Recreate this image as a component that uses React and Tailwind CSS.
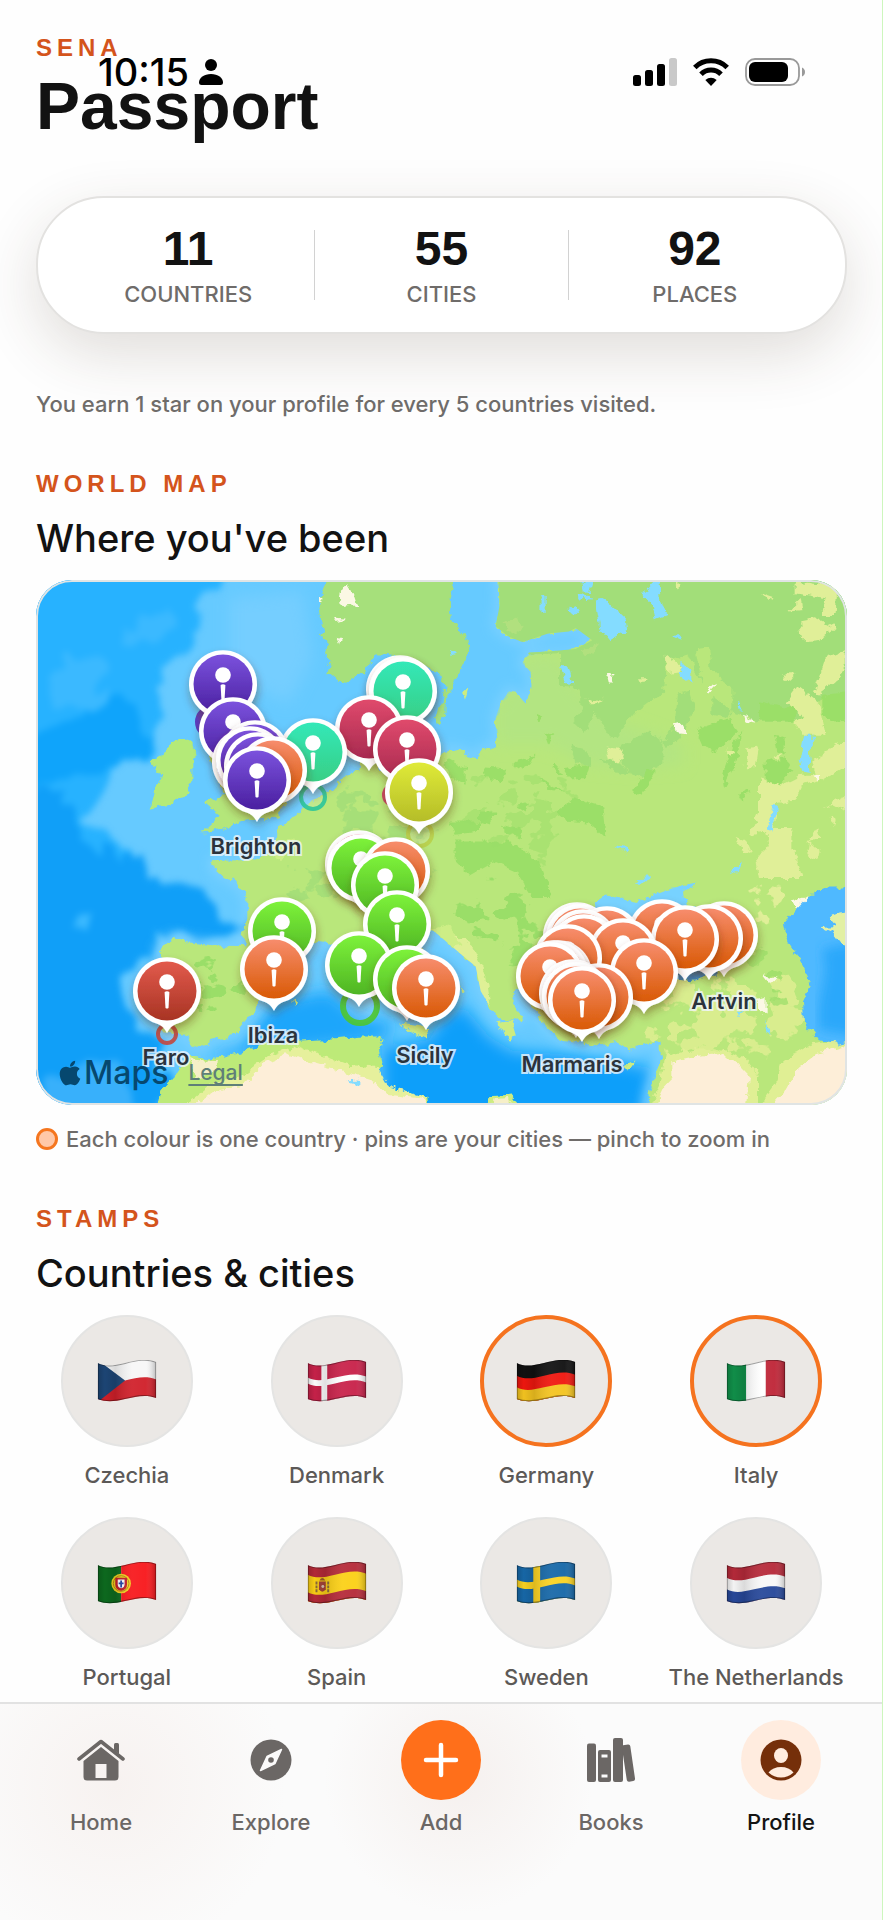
import React from "react";
import { FaApple } from "react-icons/fa";

const MAP_W = 811;
const MAP_H = 525;

const palette = {
  purple: ["#7b52dd", "#4a1fa0"],
  teal: ["#33e8b8", "#38cf85"],
  crimson: ["#e04a6c", "#a82a50"],
  lime: ["#dfea38", "#b5bd28"],
  green: ["#7df23a", "#4fb524"],
  orange: ["#f78c6c", "#d95a05"],
  red: ["#e25a4c", "#a83424"],
};

const pins = [
  { x: 187, y: 104, c: "purple" },
  { x: 364, y: 109, c: "teal" },
  { x: 367, y: 111, c: "teal" },
  { x: 333, y: 149, c: "crimson" },
  { x: 197, y: 151, c: "purple" },
  { x: 371, y: 169, c: "crimson" },
  { x: 277, y: 172, c: "teal" },
  { x: 219, y: 174, c: "purple" },
  { x: 210, y: 182, c: "purple" },
  { x: 214, y: 180, c: "purple" },
  { x: 222, y: 186, c: "purple" },
  { x: 237, y: 190, c: "orange" },
  { x: 221, y: 200, c: "purple" },
  { x: 383, y: 212, c: "lime" },
  { x: 323, y: 284, c: "crimson" },
  { x: 325, y: 288, c: "green" },
  { x: 360, y: 291, c: "orange" },
  { x: 349, y: 305, c: "green" },
  { x: 361, y: 344, c: "green" },
  { x: 246, y: 351, c: "green" },
  { x: 323, y: 385, c: "green" },
  { x: 238, y: 389, c: "orange" },
  { x: 371, y: 399, c: "green" },
  { x: 390, y: 408, c: "orange" },
  { x: 131, y: 411, c: "red" },
  { x: 626, y: 353, c: "orange" },
  { x: 688, y: 355, c: "orange" },
  { x: 541, y: 356, c: "orange" },
  { x: 544, y: 358, c: "orange" },
  { x: 673, y: 358, c: "orange" },
  { x: 649, y: 359, c: "orange" },
  { x: 571, y: 360, c: "orange" },
  { x: 547, y: 363, c: "orange" },
  { x: 548, y: 368, c: "orange" },
  { x: 587, y: 372, c: "orange" },
  { x: 532, y: 378, c: "orange" },
  { x: 522, y: 394, c: "orange" },
  { x: 518, y: 394, c: "orange" },
  { x: 514, y: 396, c: "orange" },
  { x: 608, y: 392, c: "orange" },
  { x: 563, y: 417, c: "orange" },
  { x: 537, y: 413, c: "orange" },
  { x: 540, y: 416, c: "orange" },
  { x: 546, y: 420, c: "orange" },
];

const rings = [
  { x: 277, y: 217, r: 12, w: 4, c: "#2bc59a" },
  { x: 384, y: 254, r: 12, w: 4, c: "#b9d04a" },
  { x: 324, y: 426, r: 17, w: 6, c: "#4fc62f" },
  { x: 131, y: 454, r: 9, w: 4, c: "#c4483f" },
  { x: 176, y: 142, r: 14, w: 6, c: "#5a2fb8" },
  { x: 358, y: 215, r: 10, w: 4, c: "#c8385f" },
];

const labels = [
  { x: 220, y: 266, t: "Brighton" },
  { x: 130, y: 477, t: "Faro" },
  { x: 237, y: 455, t: "Ibiza" },
  { x: 389, y: 475, t: "Sicily" },
  { x: 536, y: 484, t: "Marmaris" },
  { x: 688, y: 421, t: "Artvin" },
];

const pct = (v, total) => `${(v / total) * 100}%`;

function Pin({ x, y, c }) {
  return (
    <g transform={`translate(${x} ${y})`} filter="url(#pinShadow)">
      <path
        d="M0 42 C-3 36 -6 34 -12 32 A34 34 0 1 1 12 32 C6 34 3 36 0 42Z"
        fill="#fff"
      />
      <circle r="29.5" fill={`url(#pin-${c})`} />
      <circle cy="-9" r="7.8" fill="#fff" />
      <path d="M-2.4 1 Q0 -.5 2.4 1 L1.5 17 Q0 18 -1.5 17Z" fill="#fff" />
    </g>
  );
}

const LAND =
  "M1408 20 L1412 100 1400 160 1440 190 1480 205 1560 180 1620 175 1640 165 1690 200 1640 225 1560 232 1500 235 1480 265 1505 290 1508 340 1490 380 1460 350 1440 345 1415 380 1400 420 1405 480 1400 505 1365 508 1340 535 1290 515 1260 512 1225 530 1180 540 1120 560 1050 570 1030 500 1000 490 985 570 930 600 890 640 850 655 800 700 740 740 735 800 680 825 610 828 550 830 560 860 620 890 655 930 655 1000 640 1045 655 1072 560 1070 470 1060 430 1048 385 1085 410 1130 400 1200 385 1270 400 1315 470 1322 490 1355 520 1362 560 1335 620 1325 650 1290 690 1240 690 1200 740 1120 800 1090 860 1060 900 1070 960 1050 1010 1080 1060 1130 1110 1180 1190 1250 1240 1250 1262 1200 1230 1150 1180 1100 1170 1050 1210 1025 1290 1090 1340 1130 1355 1200 1385 1250 1410 1280 1440 1285 1482 1278 1450 1220 1465 1190 1500 1230 1540 1290 1600 1340 1650 1345 1700 1358 1760 1345 1800 1370 1850 1350 1895 1345 1895 1390 1885 1430 1865 1480 1855 1540 L2480 1540 2480 20Z";
const SCANDINAVIA =
  "M905 20 L882 60 868 110 885 170 872 185 900 205 888 235 905 265 895 290 925 315 950 322 985 305 1005 290 1040 240 1100 245 1170 270 1225 290 1250 330 1240 380 1215 420 1230 440 1248 420 1252 360 1290 290 1303 265 1325 210 1290 170 1268 140 1265 80 1278 20Z";
const BRITAIN =
  "M505 420 L560 330 640 400 700 480 770 560 790 640 745 705 640 715 580 738 520 748 572 700 525 662 590 640 560 580 520 480Z";
const IRELAND =
  "M425 490 L490 485 505 520 490 550 490 600 470 640 420 668 365 680 380 620 400 590 365 545 400 530Z";
const AFRICA =
  "M385 1540 L400 1480 440 1440 480 1385 540 1395 620 1380 700 1350 800 1345 900 1340 1000 1330 1060 1330 1050 1370 1060 1410 1030 1440 1100 1490 1195 1500 1200 1540Z";
const ISLANDS =
  "M1110 1290 L1190 1300 1195 1338 1140 1315Z M1405 1292 L1450 1285 1463 1325 1440 1342Z M1780 1415 L1820 1398 1800 1425Z M1380 1540 L1385 1500 1450 1495 1485 1540Z M1300 350 L1318 340 1308 372Z M1295 1180 L1308 1205 1300 1210Z M790 1225 L803 1222 797 1240Z";

function Patches({ id, seed, freq, cut, color, spread = 40 }) {
  return (
    <filter id={id} x="-10%" y="-10%" width="120%" height="120%" colorInterpolationFilters="sRGB">
      <feGaussianBlur in="SourceGraphic" stdDeviation={spread} result="area" />
      <feTurbulence type="fractalNoise" baseFrequency={freq} numOctaves="4" seed={seed} />
      <feColorMatrix values="0 0 0 0 1  0 0 0 0 1  0 0 0 0 1  1 0 0 0 0" result="noise" />
      <feComposite in="noise" in2="area" operator="arithmetic" k1="1" />
      <feComponentTransfer result="cutout">
        <feFuncA type="linear" slope="30" intercept={-30 * cut} />
      </feComponentTransfer>
      <feFlood floodColor={color} />
      <feComposite in2="cutout" operator="in" />
    </filter>
  );
}

function Terrain() {
  return (
    <svg
      className="block h-full w-full"
      viewBox="21 28 2433 1497"
      preserveAspectRatio="none"
      aria-hidden="true"
    >
      <defs>
        <filter id="rough" x="-5%" y="-5%" width="110%" height="110%" colorInterpolationFilters="sRGB">
          <feTurbulence type="fractalNoise" baseFrequency="0.04" numOctaves="3" seed="4" result="n" />
          <feDisplacementMap in="SourceGraphic" in2="n" scale="26" xChannelSelector="R" yChannelSelector="G" />
        </filter>
        <filter id="soft" x="-20%" y="-20%" width="140%" height="140%">
          <feGaussianBlur stdDeviation="22" />
        </filter>
        <filter id="coast" x="-10%" y="-10%" width="120%" height="120%">
          <feGaussianBlur stdDeviation="16" />
        </filter>
        <filter id="swell" x="-10%" y="-10%" width="120%" height="120%" colorInterpolationFilters="sRGB">
          <feTurbulence type="fractalNoise" baseFrequency="0.008" numOctaves="3" seed="9" result="n" />
          <feDisplacementMap in="SourceGraphic" in2="n" scale="140" xChannelSelector="R" yChannelSelector="G" />
          <feGaussianBlur stdDeviation="10" />
        </filter>
        <Patches id="woods" seed="11" freq="0.014 0.018" cut={0.53} color="#9ade68" />
        <Patches id="pine" seed="5" freq="0.013 0.016" cut={0.5} color="#a2de79" />
        <Patches id="steppe" seed="27" freq="0.013 0.015" cut={0.47} color="#e0ef98" />
        <Patches id="anatolia" seed="33" freq="0.013 0.016" cut={0.45} color="#d9ed8e" />
        <clipPath id="landClip">
          <path d={LAND} />
        </clipPath>
      </defs>

      <rect x="0" y="0" width="2500" height="1560" fill="#66caff" />
      <g filter="url(#swell)">
        <path d="M-40 -40 L560 -40 520 100 470 200 380 300 430 420 360 520 230 560 180 690 300 850 -40 900Z" fill="#27b2ff" />
        <path d="M-40 460 L150 430 220 330 400 480 300 540 180 560 80 620 -40 640Z" fill="#0fa4fb" />
        <path d="M-40 640 L150 640 190 760 300 860 450 890 560 950 650 1050 500 1060 380 1050 360 1120 290 1180 320 1300 400 1350 400 1560 -40 1560Z" fill="#109ff8" />
        <path d="M100 240 L230 260 250 350 180 400 60 390Z" fill="#3bb9ff" />
        <path d="M80 1440 L300 1420 380 1560 60 1560Z" fill="#38b0fb" />
        <path d="M120 980 L180 960 200 1010 140 1020Z M280 150 L420 120 400 180 300 200Z" fill="#3bb9ff" />
      </g>
      <g filter="url(#soft)">
        <path d="M530 1380 L640 1360 690 1290 740 1230 900 1200 1000 1280 1100 1290 1060 1340 600 1390Z" fill="#1ba6fb" />
        <path d="M1060 1360 L1200 1340 1240 1280 1300 1240 1380 1330 1450 1370 1600 1380 1740 1400 1870 1420 1840 1560 1060 1560Z" fill="#0c9ffa" />
        <path d="M600 80 L820 60 850 250 780 380 600 300Z" fill="#74ceff" />
      </g>
      <path d={LAND} fill="none" stroke="#7fd2ff" strokeWidth="22" strokeLinejoin="round" filter="url(#coast)" />

      <g filter="url(#rough)">
        <path d={LAND} fill="#b9e77b" />
        <path d={SCANDINAVIA} fill="#a6e07b" />
        <path d={BRITAIN} fill="#b4e67a" />
        <path d={IRELAND} fill="#b4ea78" />
        <path d={AFRICA} fill="#bdea78" />
        <path d={ISLANDS} fill="#cdec80" />
      </g>

      <g clipPath="url(#landClip)">
        <g transform="translate(1260 23) scale(1 .95)">
          <path d="M140 380 L240 230 330 230 390 330 480 420 620 470 700 500 700 560 560 570 420 560 300 500 140 500Z" fill="#b3e582" filter="url(#soft)" />
          <g filter="url(#rough)">
            <path
              d="M130 -10 L1220 -10 1220 350 1130 350 1040 430 930 430 850 400 850 330 790 280 780 210 740 215 760 320 720 230 650 250 645 350 600 370 560 400 500 480 470 460 440 400 410 470 370 430 400 400 385 330 330 320 330 225 230 230 130 190Z"
              fill="#a2de79"
            />
            <path
              d="M690 350 L720 340 735 390 710 460 650 510 640 490 680 440Z M790 350 L850 400 830 420 790 410Z M520 500 L600 460 640 490 640 560 560 600 520 560 500 520Z M365 500 L410 510 430 560 380 560Z M450 540 L500 550 550 590 500 580Z"
              fill="#a2de79"
            />
            <path
              d="M740 455 L840 420 870 460 800 525 760 500Z M930 370 L1040 390 1040 430 930 430Z M1120 350 L1220 340 1220 420 1150 430 1120 400Z M850 500 L880 460 860 560 825 630 820 590Z M950 550 L1010 540 1030 580 990 620 950 600Z M975 470 L1010 480 1010 530 985 520Z M555 640 L590 570 620 580 580 650Z M320 700 L375 660 460 685 470 775 420 730 350 725Z M200 550 L260 530 240 560 200 570Z M105 565 L170 570 150 610 115 600Z M270 600 L340 640 300 635Z M200 680 L240 670 230 700Z M320 555 L335 590 310 570Z M340 570 L420 560 410 600 360 600Z M90 700 L140 700 120 740 90 730Z M160 740 L220 755 215 780 160 760Z M-10 540 L50 570 50 620 0 590Z M0 730 L90 730 90 760 20 770Z M20 790 L180 790 270 850 310 960 250 960 200 880 130 850 60 890 20 850Z M260 410 L280 420 265 430Z M285 460 L310 470 300 500Z M870 650 L905 635 880 670Z"
              fill="#9bdf68"
            />
            <path
              d="M1040 10 L1165 25 1160 110 1120 110 1130 60 1040 45Z M1050 130 L1100 120 1160 150 1110 185 1060 190Z M1020 100 L1055 65 1060 95Z M935 45 L980 60 960 72Z M1190 215 L1130 240 1095 345 1110 350 1190 280Z M1000 285 L1040 290 1025 308 1005 300Z M1045 325 L1110 375 1130 470 1060 470 1040 430 1060 415 1010 370Z M650 230 L700 265 690 280 655 285Z M570 300 L595 300 580 318Z M410 360 L430 370 460 358 450 375 415 375Z M470 505 L525 515 510 555 480 545Z M895 510 L930 505 920 570 890 570Z M828 515 L855 515 850 535Z M970 530 L1000 525 985 545Z M930 600 L1000 620 1060 590 1100 590 1090 550 1160 500 1200 490 1200 560 1110 610 1060 620 1040 665 980 680 975 750 1030 750 1030 810 1060 900 930 900 920 850 960 800 950 760 900 770 930 700Z M860 780 L890 790 905 825 880 820Z M1080 790 L1115 820 1110 845 1075 825Z M1100 760 L1110 745 1118 775 1080 790Z M1120 690 L1190 650 1190 700 1150 680Z M675 10 L692 10 688 30Z M1145 720 L1160 715 1155 745Z"
              fill="#e0ef98"
            />
            <path d="M170 130 L210 115 222 150 200 165 160 140Z M400 220 L450 195 440 220 410 235Z" fill="#b1e07e" />
          </g>
        </g>
        <path d="M1280 560 L1700 560 1640 740 1560 900 1260 780Z" filter="url(#woods)" opacity=".5" />
        <path d="M900 600 L1260 560 1260 900 1060 1000 760 980 700 840 860 800Z" filter="url(#pine)" opacity=".8" />
        <path d="M1230 840 L1540 860 1600 1000 1540 1180 1400 1160 1240 1000Z" filter="url(#woods)" />
        <path d="M420 1060 L720 1080 660 1280 480 1300 400 1200Z" filter="url(#woods)" />
        <path d="M2140 850 L2330 860 2300 960 2260 1060 2120 1000Z" filter="url(#steppe)" />
        <path d="M1960 1140 L2300 1100 2400 1340 2200 1420 1900 1420 1760 1330Z" filter="url(#anatolia)" />
        <path d="M2160 1000 L2300 1100 2340 1250 2200 1300 2050 1160Z" filter="url(#woods)" opacity=".7" />
        <path d="M1250 1020 L1330 1070 1370 1150 1385 1240 1350 1210 1330 1130 1260 1070Z" fill="#dff096" filter="url(#rough)" />
        <path d="M700 800 L800 760 760 830Z M1180 1030 L1260 1010 1300 1070 1240 1080Z" fill="#cdee86" filter="url(#rough)" />
      </g>

      <g filter="url(#rough)">
        <path d="M450 1540 L540 1470 640 1440 720 1385 800 1355 870 1380 960 1410 1050 1420 1080 1470 1190 1500 1200 1540Z" fill="#e6f09c" />
        <path d="M480 1540 L560 1485 640 1470 710 1405 780 1378 850 1405 960 1435 1030 1455 1070 1495 1190 1508 1200 1540Z" fill="#fdeed8" />
        <path d="M480 1395 L570 1400 560 1430 500 1450Z M1390 1540 L1400 1508 1440 1505 1465 1540Z" fill="#f6efc8" />
        <path d="M1910 1385 L2000 1365 2090 1370 2150 1390 2190 1440 2190 1540 1855 1540 1890 1470Z M2180 1540 L2240 1460 2260 1400 2340 1350 2480 1330 2480 1540Z" fill="#e0ef94" />
        <path d="M1930 1400 L2000 1385 2070 1380 2120 1400 2160 1440 2150 1540 1870 1540 1900 1480 1930 1450Z" fill="#fdeed8" />
        <path d="M2220 1540 L2265 1490 2300 1430 2360 1380 2480 1345 2480 1540Z" fill="#fdeed8" />
        <path d="M2285 945 L2340 930 2310 970Z M940 50 L955 40 975 70 985 100 940 105 930 90Z M915 135 L955 140 920 148Z M870 80 L885 78 870 95Z M920 190 L935 195 930 210Z M1735 300 L1750 290 1750 320 1740 320Z M1935 440 L1955 435 1975 468 1940 465Z M2145 415 L2185 438 2150 432Z M2035 345 L2065 315 2050 345Z M2350 590 L2370 585 2370 605Z M2205 1155 L2240 1165 2225 1180Z M2180 1225 L2210 1220 2210 1270 2190 1260Z" fill="#fbf8e4" />
        <path d="M1700 90 L1720 85 1740 95 1790 140 1795 170 1740 200 1715 170Z M1840 62 L1860 50 1880 28 1892 40 1895 85 1912 128 1880 140 1870 100 1850 85Z M1592 268 L1618 268 1632 325 1612 322Z M1955 265 L1990 290 1990 322 1952 298Z M1538 75 L1550 72 1550 122 1537 120Z M1615 110 L1640 100 1652 115 1638 130Z M1645 70 L1690 75 1680 85 1650 80Z M1660 40 L1690 30 1680 62 1665 60Z M2325 475 L2365 475 2340 520 2345 578 2325 575 2312 540Z M2230 670 L2248 670 2235 700 2232 745 2215 735 2225 700Z M2130 370 L2145 400 2135 400Z M1760 785 L1800 798 1795 808Z M1815 895 L1830 875 1870 873 1835 890Z M2100 870 L2120 850 2140 828 2130 860Z M1935 188 L1960 185 1955 198Z M2205 1285 L2225 1325 2208 1315Z M2120 1262 L2145 1262 2130 1275Z M1255 230 L1288 240 1262 248Z M955 1455 L985 1452 985 1465Z" fill="#84dcff" />
        <path d="M1695 950 L1730 925 1780 935 1820 950 1860 930 1920 908 2005 890 1965 920 1970 950 2100 1010 2130 1090 2060 1140 2000 1170 1930 1165 1860 1120 1700 1060Z" fill="#77d2ff" />
        <path d="M1940 1130 L2090 1120 2060 1150 1990 1172 1950 1168Z" fill="#3d8fd0" />
        <path d="M2480 905 L2400 905 2340 930 2300 970 2262 1010 2275 1060 2310 1110 2348 1180 2322 1230 2325 1290 2360 1330 2430 1350 2480 1340Z" fill="#4fb9ff" />
      </g>
      <path d="M2480 1060 L2380 1080 2390 1140 2370 1240 2370 1310 2480 1330Z" fill="#2aa8fb" filter="url(#coast)" />
      <path d="M2375 1020 L2415 1018 2405 985 2480 970 2480 1080 2430 1060 2410 1035Z" fill="#e2f0a4" filter="url(#rough)" />
    </svg>
  );
}

function WorldMap() {
  return (
    <div className="relative mt-[18px] aspect-[811/525] overflow-hidden rounded-[36px]">
      <Terrain />
      <svg
        className="absolute inset-0 h-full w-full"
        viewBox={`0 0 ${MAP_W} ${MAP_H}`}
        role="img"
        aria-label="Map of visited cities"
      >
        <defs>
          <filter id="pinShadow" x="-40%" y="-40%" width="180%" height="180%">
            <feDropShadow dx="1" dy="5" stdDeviation="4" floodColor="#5a2a10" floodOpacity=".38" />
          </filter>
          {Object.entries(palette).map(([name, [a, b]]) => (
            <linearGradient key={name} id={`pin-${name}`} x1="0" y1="0" x2="0" y2="1">
              <stop offset="0" stopColor={a} />
              <stop offset="1" stopColor={b} />
            </linearGradient>
          ))}
        </defs>
        {rings.map((r, i) => (
          <circle key={i} cx={r.x} cy={r.y} r={r.r} fill="#fff" fillOpacity=".15" stroke={r.c} strokeWidth={r.w} strokeOpacity=".9" />
        ))}
        {pins.map((p, i) => (
          <Pin key={i} {...p} />
        ))}
      </svg>
      {labels.map((l) => (
        <span
          key={l.t}
          className="absolute -translate-x-1/2 -translate-y-1/2 text-[22px] leading-6 font-semibold whitespace-nowrap text-[#2b333c] [paint-order:stroke_fill] [-webkit-text-stroke:4px_rgba(240,245,250,0.8)]"
          style={{ left: pct(l.x, MAP_W), top: pct(l.y, MAP_H) }}
        >
          {l.t}
        </span>
      ))}
      <div className="absolute bottom-3 left-5 flex items-center gap-5 text-[#06486f]">
        <span className="flex items-center text-[32px] leading-10 font-medium">
          <FaApple className="size-7" />
          Maps
        </span>
        <a href="#legal" className="text-[21px] font-medium text-[#5f7f78] underline underline-offset-4">
          Legal
        </a>
      </div>
      <div className="pointer-events-none absolute inset-0 rounded-[36px] border-2 border-[#e0e4e4]" />
    </div>
  );
}

const wave = (y) => `M0 ${y} C8 ${y + 4} 16 ${y + 3} 28 ${y} S50 ${y - 5} 60 ${y - 1} L60 60 L0 60Z`;
const FLAG_SHAPE = "M0 3 C8 7 16 6 28 3 S50 -2 60 2 L60 39 C50 35 40 37 28 40 S8 43 0 40Z";

function stripes(...rows) {
  return rows.map(([y, fill]) => <path key={y} d={wave(y)} fill={fill} />);
}

const flags = {
  cz: (
    <>
      {stripes([-6, "#f7f7f7"], [21, "#d0202a"])}
      <path d="M0 0 L28 21 L0 43Z" fill="#1d4676" />
    </>
  ),
  dk: (
    <>
      {stripes([-6, "#c8224a"], [18, "#fff"], [24, "#c8224a"])}
      <path d="M14 0h6v43h-6z" fill="#fff" />
    </>
  ),
  de: stripes([-6, "#111"], [16, "#f0170f"], [28, "#f4c420"]),
  it: (
    <>
      <path d="M0 0h20v43H0z" fill="#11904a" />
      <path d="M20 0h20v43H20z" fill="#fff" />
      <path d="M40 0h20v43H40z" fill="#bf2638" />
    </>
  ),
  pt: (
    <>
      <path d="M0 0h24v43H0z" fill="#0d6b1f" />
      <path d="M24 0h36v43H24z" fill="#f8181c" />
      <circle cx="24" cy="22" r="10" fill="#f3d21f" />
      <circle cx="24" cy="22" r="8" fill="none" stroke="#b58a10" strokeWidth="1" />
      <path d="M18 16h12v7q0 5.500-6 6.500-6-1-6-6.500z" fill="#c3202a" />
      <path d="M20.500 18h7v5q0 3-3.500 4-3.500-1-3.500-4z" fill="#fff" />
      <path d="M24 19v7M21.500 22h5" stroke="#2446a8" strokeWidth="1.800" />
    </>
  ),
  es: (
    <>
      {stripes([-6, "#b52a38"], [13, "#fbd016"], [31, "#b52a38"])}
      <path d="M9 20v11M21 20v11" stroke="#8b6a3a" strokeWidth="2" strokeDasharray="3 1" />
      <path d="M11.500 20h7v8q-3.500 5-7 0z" fill="#a5443a" />
      <path d="M12 19q3-5 6 0z" fill="#9b5a2a" />
      <circle cx="15.500" cy="25" r="1.500" fill="#d9c2b0" />
    </>
  ),
  se: (
    <>
      {stripes([-6, "#1768a8"], [18, "#fbd323"], [25, "#1768a8"])}
      <path d="M17 0h7v43h-7z" fill="#fbd323" />
    </>
  ),
  nl: stripes([-6, "#b62a3a"], [16, "#f8f8f8"], [28, "#27489a"]),
};

function Flag({ code }) {
  return (
    <svg className="h-[42px] w-[60px]" viewBox="0 0 60 43" aria-hidden="true">
      <defs>
        <clipPath id={`flag-${code}`}>
          <path d={FLAG_SHAPE} />
        </clipPath>
        <linearGradient id={`shade-${code}`}>
          <stop offset="0" stopColor="#000" stopOpacity=".18" />
          <stop offset=".12" stopColor="#000" stopOpacity=".02" />
          <stop offset=".3" stopColor="#000" stopOpacity=".12" />
          <stop offset=".6" stopColor="#fff" stopOpacity=".06" />
          <stop offset=".82" stopColor="#fff" stopOpacity=".04" />
          <stop offset="1" stopColor="#000" stopOpacity=".25" />
        </linearGradient>
      </defs>
      <g clipPath={`url(#flag-${code})`}>
        {flags[code]}
        <path d={FLAG_SHAPE} fill={`url(#shade-${code})`} stroke="#000" strokeOpacity=".35" strokeWidth="2" />
      </g>
    </svg>
  );
}

const stamps = [
  { code: "cz", name: "Czechia" },
  { code: "dk", name: "Denmark" },
  { code: "de", name: "Germany", active: true },
  { code: "it", name: "Italy", active: true },
  { code: "pt", name: "Portugal" },
  { code: "es", name: "Spain" },
  { code: "se", name: "Sweden" },
  { code: "nl", name: "The Netherlands" },
];

const stats = [
  ["11", "COUNTRIES"],
  ["55", "CITIES"],
  ["92", "PLACES"],
];

function Eyebrow({ children }) {
  return (
    <p className="font-['Liberation_Sans',Arial,sans-serif] text-2xl leading-8 font-bold tracking-[5px] text-[#d4541c]">
      {children}
    </p>
  );
}

function StatusBar() {
  return (
    <div className="absolute inset-x-0 top-0 flex items-center justify-between pt-[52px] pr-[76px] pl-[98px] text-black">
      <div className="flex items-center gap-2.5">
        <span className="text-[38px] leading-10 font-medium">10:15</span>
        <svg className="h-[26px] w-6" viewBox="0 0 24 26" fill="currentColor" aria-hidden="true">
          <circle cx="12" cy="6" r="6" />
          <path d="M12 15c7 0 12 4 12 8.500 0 1.700-1 2.500-2.500 2.500h-19C1 26 0 25.200 0 23.500 0 19 5 15 12 15z" />
        </svg>
      </div>
      <div className="flex items-center gap-4">
        <svg className="h-7 w-11" viewBox="0 0 44 28" fill="currentColor" aria-hidden="true">
          <rect x="0" y="17" width="8" height="11" rx="2.500" />
          <rect x="12" y="12" width="8" height="16" rx="2.500" />
          <rect x="24" y="6" width="8" height="22" rx="2.500" />
          <rect x="36" y="0" width="8" height="28" rx="2.500" fill="#c9c9c9" />
        </svg>
        <svg className="h-7 w-9" viewBox="0 0 36 28" aria-hidden="true">
          <g fill="none" stroke="#000" strokeWidth="5">
            <path d="M1.800 9.500 A23 23 0 0 1 34.200 9.500" />
            <path d="M8 16.200 A14 14 0 0 1 28 16.200" />
          </g>
          <path d="M18 28 L12.300 22 Q18 17.500 23.700 22Z" fill="#000" />
        </svg>
        <svg className="h-7 w-[61px]" viewBox="0 0 61 28" aria-hidden="true">
          <rect x="1" y="1" width="53" height="26" rx="9" fill="none" stroke="#999" strokeWidth="1.800" />
          <rect x="4" y="4" width="39" height="20" rx="6" fill="#000" />
          <path d="M57 9.500q3 1.500 3 4.500t-3 4.500z" fill="#999" />
        </svg>
      </div>
    </div>
  );
}

const tabIcons = {
  home: (
    <svg className="h-[42px] w-12" viewBox="0 0 48 42" aria-hidden="true">
      <path d="M37 5.500q0-1.500 1.500-1.500h2q1.500 0 1.500 1.500V15l-5-4z" fill="currentColor" />
      <path d="M2 20 L24 2.500 L46 20" fill="none" stroke="currentColor" strokeWidth="3.600" strokeLinecap="round" strokeLinejoin="round" />
      <path
        fillRule="evenodd"
        d="M24 8 L41.500 22 V38q0 3.500-3.500 3.500H10q-3.500 0-3.500-3.500V22Z M18.500 25v14h11V25z"
        fill="currentColor"
      />
    </svg>
  ),
  explore: (
    <svg className="size-[42px]" viewBox="0 0 42 42" aria-hidden="true">
      <circle cx="21" cy="21" r="20.500" fill="currentColor" />
      <path d="M31.500 10.500 L25 24.500 L10.500 31.500 L17 17.500Z" fill="#fbfafa" stroke="#fbfafa" strokeWidth="1.500" strokeLinejoin="round" />
      <circle cx="21" cy="21" r="2.800" fill="currentColor" />
    </svg>
  ),
  add: (
    <svg className="size-9" viewBox="0 0 36 36" aria-hidden="true">
      <path d="M18 3v30M3 18h30" stroke="#fff" strokeWidth="4.500" strokeLinecap="round" />
    </svg>
  ),
  books: (
    <svg className="h-11 w-12" viewBox="0 0 48 44" fill="currentColor" aria-hidden="true">
      <rect x="0" y="5.500" width="9" height="38.500" rx="2" />
      <path
        fillRule="evenodd"
        d="M13 12h9q2 0 2 2v28q0 2-2 2h-9q-2 0-2-2V14q0-2 2-2z M14.500 16.500v3h6v-3z M14.500 36.500v3h6v-3z"
      />
      <rect x="26" y="0" width="10" height="44" rx="2" />
      <path d="M34.500 7.500l6.500-1q2-.2 2.300 1.700L48 40.500q.2 2-1.800 2.400l-4 .9q-2 .2-2.400-1.700L36.500 20z" />
    </svg>
  ),
  profile: (
    <svg className="size-[42px]" viewBox="0 0 42 42" aria-hidden="true">
      <circle cx="21" cy="21" r="20.500" fill="#752f0a" />
      <ellipse cx="21" cy="16.500" rx="7" ry="7.500" fill="#ffecdf" />
      <path d="M8.500 33.500 Q13 28 21 28 T33.500 33.500 Q28 38.500 21 38.500 T8.500 33.500Z" fill="#ffecdf" />
    </svg>
  ),
};

const tabs = [
  { id: "home", label: "Home" },
  { id: "explore", label: "Explore" },
  { id: "add", label: "Add", chip: "bg-[#ff6f1a]" },
  { id: "books", label: "Books" },
  { id: "profile", label: "Profile", chip: "bg-[#ffecdf]", current: true },
];

function TabBar() {
  return (
    <nav className="sticky bottom-0 border-t-2 border-[#e2e2e2] bg-[#fbfbfb] bg-[radial-gradient(circle_at_13%_38%,#f7f2f0_0,transparent_22%),radial-gradient(circle_at_52%_35%,#f5f0ee_0,transparent_28%)] px-4 pt-4 pb-[84px]">
      <ul className="grid grid-cols-5">
        {tabs.map((t) => (
          <li key={t.id}>
            <a
              href={`#${t.id}`}
              aria-current={t.current ? "page" : undefined}
              className={`flex flex-col items-center gap-2 text-[22px] leading-7 font-medium ${t.current ? "text-[#141414]" : "text-[#6b6765]"}`}
            >
              <span className={`flex size-20 items-center justify-center rounded-full ${t.chip || ""}`}>
                {tabIcons[t.id]}
              </span>
              {t.label}
            </a>
          </li>
        ))}
      </ul>
    </nav>
  );
}

export default function App() {
  return (
    <div className="relative flex min-h-screen flex-col border-r border-[#cdf7bd] bg-[#fefefe] font-['Inter',sans-serif] text-[#121212]">
      <main className="flex-1 pt-8 pr-[35px] pl-9">
        <header>
          <Eyebrow>SENA</Eyebrow>
          <h1 className="mt-1.5 font-['Liberation_Sans',Arial,sans-serif] text-[66px] leading-[72px] font-bold">Passport</h1>
        </header>

        <dl className="mt-[54px] flex rounded-[68px] border-2 border-[#e3e2e0] bg-white px-6 py-6 shadow-[0_20px_60px_rgba(70,50,30,0.16)]">
          {stats.map(([value, label], i) => (
            <React.Fragment key={label}>
              {i > 0 && <div role="presentation" className="my-2 w-px bg-[#d2d2d2]" />}
              <div className="flex flex-1 flex-col-reverse items-center gap-1">
                <dt className="text-[22px] leading-7 font-medium text-[#6f6c6a]">{label}</dt>
                <dd className="font-['Liberation_Sans',Arial,sans-serif] text-5xl leading-[54px] font-bold">{value}</dd>
              </div>
            </React.Fragment>
          ))}
        </dl>

        <p className="relative mt-[54px] text-[22px] leading-8 font-medium text-[#6f6c6a]">
          You earn 1 star on your profile for every 5 countries visited.
        </p>

        <section className="mt-12">
          <Eyebrow>WORLD MAP</Eyebrow>
          <h2 className="mt-3.5 text-[38px] leading-[48px] font-medium">Where you've been</h2>
          <WorldMap />
          <p className="mt-[18px] flex items-center gap-2 text-[22px] leading-8 font-medium text-[#6f6c6a]">
            <span className="size-[22px] shrink-0 rounded-full border-[3px] border-[#f5761f] bg-[#ffc8a8]" />
            Each colour is one country · pins are your cities — pinch to zoom in
          </p>
        </section>

        <section className="mt-12">
          <Eyebrow>STAMPS</Eyebrow>
          <h2 className="mt-3.5 text-[38px] leading-[48px] font-medium">Countries &amp; cities</h2>
          <ul className="mt-[18px] grid grid-cols-4 gap-x-7 gap-y-[26px]">
            {stamps.map((s) => (
              <li key={s.code}>
                <button type="button" className="flex w-full flex-col items-center gap-3">
                  <span
                    className={`flex size-[132px] items-center justify-center rounded-full bg-[#ebe8e5] ${s.active ? "border-4 border-[#f5731f]" : "border-2 border-[#e4e4e3]"}`}
                  >
                    <Flag code={s.code} />
                  </span>
                  <span className="text-[22px] leading-8 font-medium whitespace-nowrap text-[#5c5957]">{s.name}</span>
                </button>
              </li>
            ))}
          </ul>
        </section>
      </main>
      <TabBar />
      <StatusBar />
    </div>
  );
}
